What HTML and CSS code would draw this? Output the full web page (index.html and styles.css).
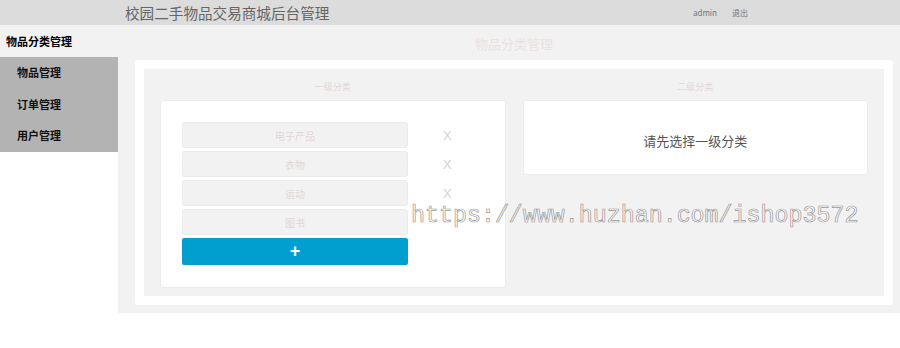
FILE: index.html
```html
<!DOCTYPE html>
<html lang="zh-CN">
<head>
  <meta charset="UTF-8" />
  <meta name="viewport" content="width=device-width, initial-scale=1.0"/>
  <title>物品分类管理</title>
  <link rel="stylesheet" href="styles.css">
</head>
<body>
  <div id="header">
    <div class="site-title">校园二手物品交易商城后台管理</div>
    <div class="user-links">
      <span>admin</span>
      <span>退出</span>
    </div>
  </div>

  <div id="layout">
    <div id="sidebar">
      <div class="nav-current">物品分类管理</div>
      <div class="nav-list">
        <div class="nav-item">物品管理</div>
        <div class="nav-item">订单管理</div>
        <div class="nav-item">用户管理</div>
      </div>
    </div>

    <div id="main">
      <h2 class="page-title">物品分类管理</h2>
      <div class="card">
        <div class="panel">
          <div class="column">
            <div class="column-title">一级分类</div>
            <div class="box box-list">
              <div class="cat-row"><div class="cat-name">电子产品</div><span class="cat-del">X</span></div>
              <div class="cat-row"><div class="cat-name">衣物</div><span class="cat-del">X</span></div>
              <div class="cat-row"><div class="cat-name">运动</div><span class="cat-del">X</span></div>
              <div class="cat-row"><div class="cat-name">图书</div></div>
              <div class="cat-row"><button class="add-btn">+</button></div>
            </div>
          </div>
          <div class="column">
            <div class="column-title">二级分类</div>
            <div class="box box-empty">请先选择一级分类</div>
          </div>
        </div>
      </div>
    </div>
  </div>

  <div class="watermark">https://www.huzhan.com/ishop3572</div>
</body>
</html>
```

FILE: styles.css
```css
body {
  margin: 0;
  font-family: "Noto Sans CJK SC", "Noto Sans", sans-serif;
  background: #fff;
  color: #333;
  overflow: hidden;
}
#header {
  height: 25px;
  background: #dcdcdc;
  display: flex;
  align-items: center;
  padding-left: 125px;
}
.site-title {
  font-size: 14.6px;
  color: #666;
  width: 568px;
  line-height: 25px;
}
.user-links {
  display: flex;
  gap: 15px;
  font-size: 8px;
  color: #777;
}
#layout {
  display: flex;
  align-items: flex-start;
}
#sidebar {
  width: 118px;
  flex-shrink: 0;
}
.nav-current {
  height: 32px;
  line-height: 32px;
  background: #f2f2f2;
  padding-left: 6px;
  font-size: 11px;
  font-weight: bold;
  color: #000;
}
.nav-list {
  background: #b3b3b3;
}
.nav-item {
  height: 31.5px;
  line-height: 31.5px;
  padding-left: 17px;
  font-size: 11px;
  font-weight: bold;
  color: #111;
}
#main {
  flex: 1;
  background: #f2f2f2;
  padding: 0 7px 8px 17px;
}
.page-title {
  margin: 0;
  height: 35px;
  line-height: 38px;
  text-align: center;
  font-size: 13px;
  font-weight: normal;
  color: #ebe1e1;
}
.card {
  background: #fff;
  border-radius: 3px;
  padding: 9px;
}
.panel {
  background: #f2f2f2;
  padding: 0 16px 8px 16px;
  display: flex;
  gap: 17px;
  align-items: flex-start;
}
.column {
  flex: 1;
}
.column-title {
  height: 31px;
  line-height: 35px;
  text-align: center;
  font-size: 9px;
  color: #e3d8d8;
}
.box {
  background: #fff;
  border: 1px solid #ececec;
  border-radius: 3px;
  box-sizing: border-box;
}
.box-list {
  height: 188px;
  padding: 21px 0 0 21px;
  display: flex;
  flex-direction: column;
  gap: 3px;
}
.cat-row {
  display: flex;
  align-items: center;
}
.cat-name {
  width: 226px;
  height: 26px;
  line-height: 26px;
  box-sizing: border-box;
  background: #f2f2f2;
  border: 1px solid #ebebeb;
  border-radius: 3px;
  text-align: center;
  font-size: 10px;
  color: #e3d6d6;
}
.cat-del {
  margin-left: 35px;
  font-family: "Liberation Sans", sans-serif;
  font-size: 13px;
  color: #d2d2d2;
}
.add-btn {
  width: 226px;
  height: 27px;
  border: none;
  border-radius: 2px;
  background: #009fd0;
  color: #fff;
  font-family: "Liberation Sans", sans-serif;
  font-size: 18px;
  font-weight: bold;
  line-height: 27px;
  padding: 0;
}
.box-empty {
  height: 75px;
  line-height: 80px;
  text-align: center;
  font-size: 13px;
  color: #555;
}
.watermark {
  position: absolute;
  left: 411px;
  top: 203px;
  font-family: "Liberation Mono", monospace;
  font-size: 23.3px;
  color: rgba(255, 255, 255, 0.6);
  -webkit-text-stroke: 0.7px #9a9a9a;
  pointer-events: none;
}
```
